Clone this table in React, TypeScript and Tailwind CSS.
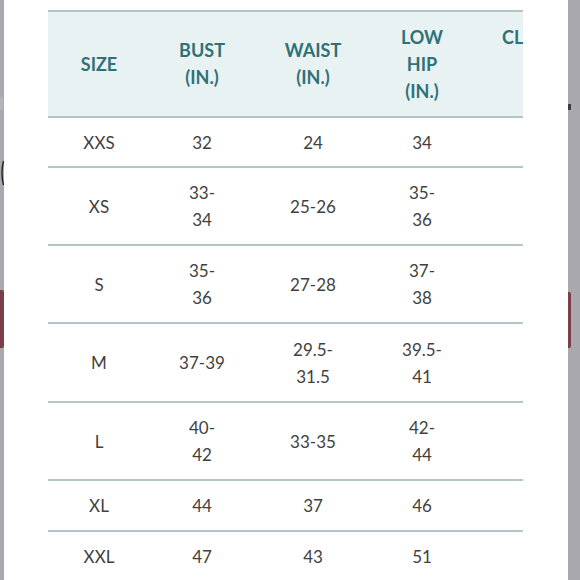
import React from 'react';

type Row = { size: string; cells: string[][]; h: string };

const rows: Row[] = [
  { size: 'XXS', cells: [['32'], ['24'], ['34']], h: 'h-[50px]' },
  { size: 'XS', cells: [['33-', '34'], ['25-26'], ['35-', '36']], h: 'h-[78px]' },
  { size: 'S', cells: [['35-', '36'], ['27-28'], ['37-', '38']], h: 'h-[78px]' },
  { size: 'M', cells: [['37-39'], ['29.5-', '31.5'], ['39.5-', '41']], h: 'h-[79px]' },
  { size: 'L', cells: [['40-', '42'], ['33-35'], ['42-', '44']], h: 'h-[78px]' },
  { size: 'XL', cells: [['44'], ['37'], ['46']], h: 'h-[51px]' },
  { size: 'XXL', cells: [['47'], ['43'], ['51']], h: 'h-[50px]' },
];

const cols = 'grid grid-cols-[102px_104px_118px_100px_51px]';

const Lines: React.FC<{ lines: string[]; className?: string }> = ({ lines, className }) => (
  <div className={`flex flex-col items-center justify-center ${className ?? ''}`}>
    {lines.map((l, i) => (
      <span key={i} className="leading-[27px] whitespace-nowrap">
        {l}
      </span>
    ))}
  </div>
);

export default function App() {
  return (
    <div className="w-[580px] h-[580px] flex overflow-hidden bg-[#a9a8ad] font-['Lato','Open_Sans',sans-serif]">
      {/* left edge of the app behind */}
      <div className="w-[4px] shrink-0 flex flex-col items-start">
        <div className="h-[97px]" />
        <div className="h-[13px] w-[3px] bg-[#b6b5ba]" />
        <div className="h-[50px]" />
        <svg width="4" height="26" viewBox="0 0 4 26">
          <path d="M3.5 1 Q0.5 13 3.5 25" stroke="#1f1f22" strokeWidth="1.4" fill="none" />
        </svg>
        <div className="h-[104px]" />
        <div className="h-[58px] w-[4px] rounded-r-[2px] bg-[#7b3d47]" />
      </div>

      <div className="w-[564px] shrink-0 bg-white pt-[10px] pl-[44px] overflow-hidden">
        <div className="w-[475px] border-t-2 border-[#b3c6c7] text-[17px]">
          <div className={`${cols} h-[106px] bg-[#e9f2f3] border-b-2 border-[#b3c6c7] font-bold text-[18px] text-[#2e7176]`}>
            <Lines lines={['SIZE']} />
            <Lines lines={['BUST', '(IN.)']} />
            <Lines lines={['WAIST', '(IN.)']} />
            <Lines lines={['LOW', 'HIP', '(IN.)']} />
            <div className="flex flex-col justify-center overflow-hidden pl-[30px]">
              <span className="leading-[27px]">CL</span>
              <span className="leading-[27px]">&nbsp;</span>
              <span className="leading-[27px]">&nbsp;</span>
            </div>
          </div>
          {rows.map((r) => (
            <div key={r.size} className={`${cols} ${r.h} border-b-2 border-[#b3c6c7] text-[#414141]`}>
              <Lines lines={[r.size]} />
              {r.cells.map((c, i) => (
                <Lines key={i} lines={c} />
              ))}
              <div />
            </div>
          ))}
        </div>
      </div>

      {/* right edge of the app behind */}
      <div className="w-[12px] shrink-0 flex flex-col items-start">
        <div className="h-[104px]" />
        <div className="h-[6px] w-[3px] bg-[#3b3b40]" />
        <div className="h-[182px]" />
        <div className="h-[56px] w-[3px] rounded-r-[2px] bg-[#7b3d47]" />
      </div>
    </div>
  );
}
